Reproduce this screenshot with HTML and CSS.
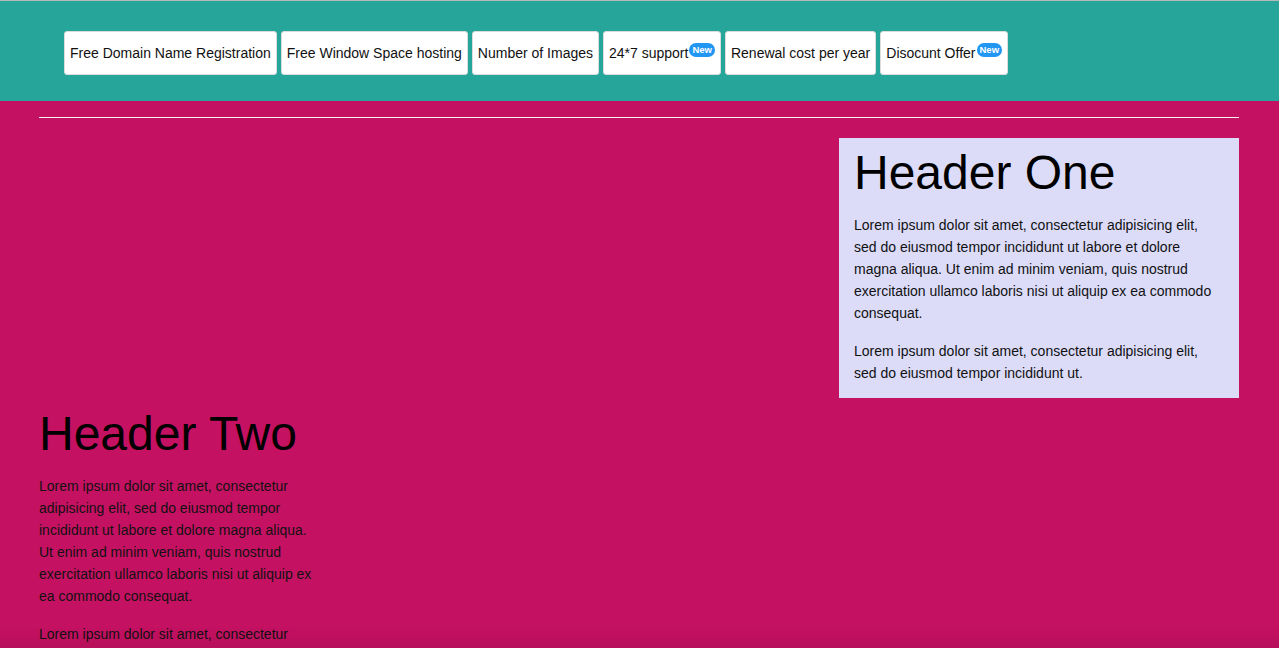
FILE: index.html
```html
<!DOCTYPE html>
<html lang="en">
<head>
<meta charset="utf-8">
<title>Hosting</title>
<link rel="stylesheet" href="styles.css">
</head>
<body>
<header class="topbar">
  <nav class="tabs">
    <a class="tab" href="#">Free Domain Name Registration</a>
    <a class="tab" href="#">Free Window Space hosting</a>
    <a class="tab" href="#">Number of Images</a>
    <a class="tab" href="#">24*7 support<span class="badge">New</span></a>
    <a class="tab" href="#">Renewal cost per year</a>
    <a class="tab" href="#">Disocunt Offer<span class="badge">New</span></a>
  </nav>
</header>
<main class="container">
  <hr class="rule">
  <div class="row-right">
    <section class="card">
      <h1 class="title">Header One</h1>
      <p class="text">Lorem ipsum dolor sit amet, consectetur adipisicing elit, sed do eiusmod tempor incididunt ut labore et dolore magna aliqua. Ut enim ad minim veniam, quis nostrud exercitation ullamco laboris nisi ut aliquip ex ea commodo consequat.</p>
      <p class="text last">Lorem ipsum dolor sit amet, consectetur adipisicing elit, sed do eiusmod tempor incididunt ut.</p>
    </section>
  </div>
  <section class="side">
    <h1 class="title">Header Two</h1>
    <p class="text">Lorem ipsum dolor sit amet, consectetur adipisicing elit, sed do eiusmod tempor incididunt ut labore et dolore magna aliqua. Ut enim ad minim veniam, quis nostrud exercitation ullamco laboris nisi ut aliquip ex ea commodo consequat.</p>
    <p class="text">Lorem ipsum dolor sit amet, consectetur adipisicing elit, sed do eiusmod tempor incididunt ut.</p>
  </section>
</main>
<div class="bottom-shade"></div>
</body>
</html>
```
FILE: styles.css
```css
html, body {
  margin: 0;
  padding: 0;
}
body {
  background: #c51162;
  font-family: "Liberation Sans", Arial, Helvetica, sans-serif;
  color: #000;
  font-size: 14px;
}
.topbar {
  background: #26a69a;
  border-top: 1px solid #b8b8b8;
  padding: 30px 64px 26px;
}
.tabs {
  display: flex;
  gap: 4px;
}
.tab {
  display: flex;
  align-items: center;
  height: 44px;
  box-sizing: border-box;
  padding: 0 5px;
  background: #fff;
  border: 1px solid #dcdcdc;
  border-radius: 3px;
  color: #111;
  text-decoration: none;
  font-size: 14px;
  white-space: nowrap;
}
.badge {
  align-self: flex-start;
  margin-top: 11px;
  margin-left: 1px;
  background: #2196f3;
  color: #fff;
  font-size: 9.5px;
  font-weight: bold;
  line-height: 12px;
  padding: 1px 3px;
  border-radius: 8px;
}
.container {
  width: 1200px;
  margin: 0 0 0 39px;
  padding-top: 16px;
}
.rule {
  margin: 0;
  border: 0;
  height: 1px;
  background: #f4f4f4;
}
.row-right {
  display: flex;
  justify-content: flex-end;
  margin-top: 20px;
}
.card {
  width: 400px;
  box-sizing: border-box;
  background: #dcdcf9;
  padding: 7px 15px 14px;
}
.title {
  margin: 0 0 14px;
  font-size: 48px;
  line-height: 55px;
  font-weight: normal;
  color: #000;
}
.text {
  margin: 0 0 16px;
  line-height: 22px;
  color: #111;
}
.text.last {
  margin-bottom: 0;
}
.side {
  width: 282px;
  margin-top: 8px;
}
.bottom-shade {
  position: fixed;
  left: 0;
  right: 0;
  bottom: 0;
  height: 22px;
  background: linear-gradient(rgba(0,0,0,0), rgba(0,0,0,0.07));
  pointer-events: none;
}
```
